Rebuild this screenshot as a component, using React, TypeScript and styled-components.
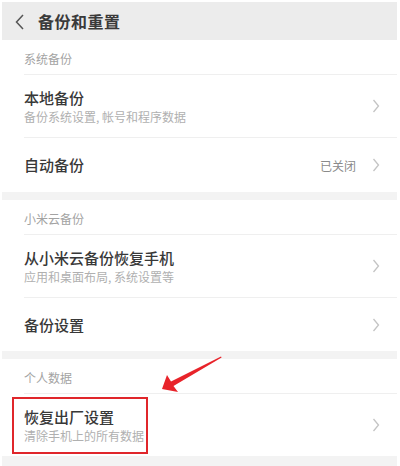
import React from 'react';
import styled, { createGlobalStyle } from 'styled-components';

const GlobalStyle = createGlobalStyle`
    html, body {
        margin: 0;
        padding: 0;
        background: #ffffff;
    }
    body {
        font-family: "Noto Sans CJK SC", "Noto Sans", sans-serif;
    }
`;

const Page = styled.div`
    position: relative;
    width: 400px;
    height: 466px;
    box-sizing: border-box;
    padding: 2px 3px 0 2px;
    background: #ffffff;
    overflow: hidden;
`;

const Header = styled.div`
    height: 38px;
    display: flex;
    align-items: center;
    background: #ececec;
`;

const BackButton = styled.div`
    width: 36px;
    display: flex;
    justify-content: center;
    padding-top: 1px;
`;

const HeaderTitle = styled.h1`
    margin: 0;
    font-size: 16px;
    font-weight: 700;
    color: #3a3a3a;
    letter-spacing: 0.5px;
`;

const Section = styled.div`
    background: #ffffff;
`;

const Gap = styled.div`
    height: 8px;
    background: #f3f3f3;
`;

const Filler = styled.div`
    height: 20px;
    background: #f3f3f3;
`;

const Row = styled.div`
    padding-left: 22px;
`;

const RowInner = styled.div<{ $height: number; $last?: boolean }>`
    height: ${p => p.$height}px;
    display: flex;
    align-items: center;
    padding-right: 17px;
    border-bottom: ${p => (p.$last ? 'none' : '1px solid #efefef')};
`;

const LabelInner = styled(RowInner)`
    padding-top: 3px;
    box-sizing: content-box;
    height: 31px;
`;

const SectionLabel = styled.span`
    font-size: 12px;
    color: #a3a3a3;
`;

const Texts = styled.div`
    flex: 1;
    display: flex;
    flex-direction: column;
`;

const Title = styled.span`
    font-size: 15px;
    line-height: 20px;
    font-weight: 500;
    color: #383838;
`;

const Sub = styled.span`
    font-size: 12px;
    line-height: 16px;
    margin-top: 1px;
    color: #b0b0b0;
`;

const Value = styled.span`
    font-size: 12px;
    color: #8a8a8a;
    margin-right: 16px;
`;

const Highlight = styled.div`
    position: absolute;
    left: 12px;
    top: 397px;
    width: 136px;
    height: 57px;
    box-sizing: border-box;
    border: 2px solid #e0262b;
`;

const Pointer = styled.svg`
    position: absolute;
    left: 0;
    top: 0;
    pointer-events: none;
`;

const Chevron = () => (
    <svg width="8" height="14" viewBox="0 0 8 14">
        <path d="M1.5 1 L6.5 7 L1.5 13" fill="none" stroke="#c4c4c4" strokeWidth="1.3" />
    </svg>
);

const BackArrow = () => (
    <svg width="10" height="16" viewBox="0 0 10 16">
        <path d="M8 1 L1.5 8 L8 15" fill="none" stroke="#555555" strokeWidth="1.5" />
    </svg>
);

interface ItemProps {
    title: string;
    sub?: string;
    value?: string;
    last?: boolean;
    height?: number;
}

const Item: React.FC<ItemProps> = ({ title, sub, value, last, height }) => (
    <Row>
        <RowInner $height={height ?? (sub ? 62 : 54)} $last={last}>
            <Texts>
                <Title>{title}</Title>
                {sub && <Sub>{sub}</Sub>}
            </Texts>
            {value && <Value>{value}</Value>}
            <Chevron />
        </RowInner>
    </Row>
);

const Label: React.FC<{ text: string }> = ({ text }) => (
    <Row>
        <LabelInner $height={31}>
            <SectionLabel>{text}</SectionLabel>
        </LabelInner>
    </Row>
);

export default function App() {
    return (
        <>
            <GlobalStyle />
            <Page>
                <Header>
                    <BackButton>
                        <BackArrow />
                    </BackButton>
                    <HeaderTitle>备份和重置</HeaderTitle>
                </Header>

                <Section>
                    <Label text="系统备份" />
                    <Item title="本地备份" sub="备份系统设置, 帐号和程序数据" />
                    <Item title="自动备份" value="已关闭" last />
                </Section>
                <Gap />

                <Section>
                    <Label text="小米云备份" />
                    <Item title="从小米云备份恢复手机" sub="应用和桌面布局, 系统设置等" />
                    <Item title="备份设置" last height={53} />
                </Section>
                <Gap />

                <Section>
                    <Label text="个人数据" />
                    <Item title="恢复出厂设置" sub="清除手机上的所有数据" last />
                </Section>
                <Filler />

                <Highlight />
                <Pointer width="400" height="466" viewBox="0 0 400 466">
                    <polygon
                        points="162,389 167,375 171,381.5 221,356.5 221.6,357.6 173.5,386 178,392"
                        fill="#e8232a"
                    />
                </Pointer>
            </Page>
        </>
    );
}
